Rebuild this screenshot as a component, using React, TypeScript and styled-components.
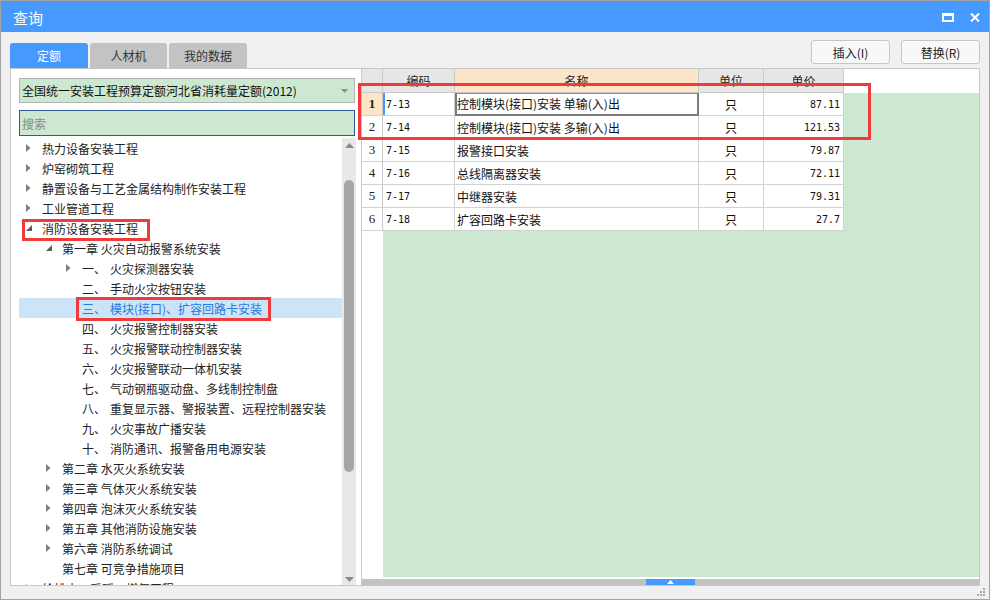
import React from "react";
import styled, { createGlobalStyle } from "styled-components";

const GlobalStyle = createGlobalStyle`
  html, body { margin: 0; padding: 0; background: #ffffff; }
  body {
    font-family: "Noto Sans CJK SC", "Liberation Sans", sans-serif;
    font-size: 12px;
    color: #222;
  }
  * { box-sizing: border-box; }
`;

interface TreeItem {
  level: number;
  toggle?: "open" | "closed";
  num?: string;
  text: string;
  selected?: boolean;
}

const treeItems: TreeItem[] = [
  { level: 0, toggle: "closed", text: "热力设备安装工程" },
  { level: 0, toggle: "closed", text: "炉窑砌筑工程" },
  { level: 0, toggle: "closed", text: "静置设备与工艺金属结构制作安装工程" },
  { level: 0, toggle: "closed", text: "工业管道工程" },
  { level: 0, toggle: "open", text: "消防设备安装工程" },
  { level: 1, toggle: "open", text: "第一章 火灾自动报警系统安装" },
  { level: 2, toggle: "closed", num: "一、", text: "火灾探测器安装" },
  { level: 2, num: "二、", text: "手动火灾按钮安装" },
  { level: 2, num: "三、", text: "模块(接口)、扩容回路卡安装", selected: true },
  { level: 2, num: "四、", text: "火灾报警控制器安装" },
  { level: 2, num: "五、", text: "火灾报警联动控制器安装" },
  { level: 2, num: "六、", text: "火灾报警联动一体机安装" },
  { level: 2, num: "七、", text: "气动钢瓶驱动盘、多线制控制盘" },
  { level: 2, num: "八、", text: "重复显示器、警报装置、远程控制器安装" },
  { level: 2, num: "九、", text: "火灾事故广播安装" },
  { level: 2, num: "十、", text: "消防通讯、报警备用电源安装" },
  { level: 1, toggle: "closed", text: "第二章 水灭火系统安装" },
  { level: 1, toggle: "closed", text: "第三章 气体灭火系统安装" },
  { level: 1, toggle: "closed", text: "第四章 泡沫灭火系统安装" },
  { level: 1, toggle: "closed", text: "第五章 其他消防设施安装" },
  { level: 1, toggle: "closed", text: "第六章 消防系统调试" },
  { level: 1, text: "第七章 可竞争措施项目" },
  { level: 0, toggle: "closed", text: "给排水、采暖、燃气工程" },
];

interface Row {
  code: string;
  name: string;
  unit: string;
  price: string;
}

const rows: Row[] = [
  { code: "7-13", name: "控制模块(接口)安装 单输(入)出", unit: "只", price: "87.11" },
  { code: "7-14", name: "控制模块(接口)安装 多输(入)出", unit: "只", price: "121.53" },
  { code: "7-15", name: "报警接口安装", unit: "只", price: "79.87" },
  { code: "7-16", name: "总线隔离器安装", unit: "只", price: "72.11" },
  { code: "7-17", name: "中继器安装", unit: "只", price: "79.31" },
  { code: "7-18", name: "扩容回路卡安装", unit: "只", price: "27.7" },
];

export default function App() {
  return (
    <>
      <GlobalStyle />
      <Window>
        <TitleBar>
          <span>查询</span>
          <WinControls>
            <svg width="12" height="9" viewBox="0 0 12 9">
              <rect x="1" y="1" width="10" height="7" fill="none" stroke="#fff" strokeWidth="2" />
              <rect x="1" y="1" width="10" height="2" fill="#fff" />
            </svg>
            <svg width="10" height="9" viewBox="0 0 10 9">
              <path d="M1 0.5 L9 8.5 M9 0.5 L1 8.5" stroke="#fff" strokeWidth="2" />
            </svg>
          </WinControls>
        </TitleBar>

        <Body>
          <TopBar>
            <Tabs>
              <Tab $active $w={78}>定额</Tab>
              <Tab $w={77}>人材机</Tab>
              <Tab $w={78}>我的数据</Tab>
            </Tabs>
            <Buttons>
              <Button>插入(I)</Button>
              <Button>替换(R)</Button>
            </Buttons>
          </TopBar>

          <Main>
            <LeftPanel>
              <Dropdown>
                <span>全国统一安装工程预算定额河北省消耗量定额(2012)</span>
                <svg width="7" height="4" viewBox="0 0 7 4">
                  <polygon points="0,0 7,0 3.5,4" fill="#8c8c8c" />
                </svg>
              </Dropdown>
              <Search placeholder="搜索" />
              <TreeArea>
                <TreeList>
                  {treeItems.map((it, i) => (
                    <TreeRow key={i} $level={it.level} $selected={!!it.selected}>
                      <Toggle>
                        {it.toggle === "closed" && (
                          <svg width="5" height="8" viewBox="0 0 5 8">
                            <polygon points="0,0 4.5,4 0,8" fill="#7f7f7f" />
                          </svg>
                        )}
                        {it.toggle === "open" && (
                          <svg width="6" height="6" viewBox="0 0 6 6">
                            <polygon points="6,0 6,6 0,6" fill="#5a5a5a" />
                          </svg>
                        )}
                      </Toggle>
                      {it.num && <Num>{it.num}</Num>}
                      <span>{it.text}</span>
                    </TreeRow>
                  ))}
                </TreeList>
                <VScroll>
                  <svg width="9" height="5" viewBox="0 0 9 5">
                    <polygon points="0,5 9,5 4.5,0" fill="#8a8a8a" />
                  </svg>
                  <VThumb />
                  <svg width="9" height="5" viewBox="0 0 9 5">
                    <polygon points="0,0 9,0 4.5,5" fill="#8a8a8a" />
                  </svg>
                </VScroll>
              </TreeArea>
            </LeftPanel>

            <RightPanel>
              <Grid>
                <HeaderRow>
                  <HeadCell $w={21} />
                  <HeadCell $w={72}>编码</HeadCell>
                  <HeadCell $w={244} $active>名称</HeadCell>
                  <HeadCell $w={65}>单位</HeadCell>
                  <HeadCell $w={80}>单价</HeadCell>
                  <HeadFill />
                </HeaderRow>
                <GridBody>
                  <RowHeadCol>
                    {rows.map((r, i) => (
                      <RowHead key={r.code} $active={i === 0}>{i + 1}</RowHead>
                    ))}
                  </RowHeadCol>
                  <DataCol>
                    {rows.map((r, i) => (
                      <DataRow key={r.code}>
                        <CodeCell $active={i === 0}>{r.code}</CodeCell>
                        <NameCell $focused={i === 0}>{r.name}</NameCell>
                        <UnitCell>{r.unit}</UnitCell>
                        <PriceCell>{r.price}</PriceCell>
                      </DataRow>
                    ))}
                  </DataCol>
                </GridBody>
              </Grid>
              <HScroll>
                <HThumb>
                  <svg width="7" height="4" viewBox="0 0 7 4">
                    <polygon points="0,4 7,4 3.5,0" fill="#fff" />
                  </svg>
                </HThumb>
              </HScroll>
            </RightPanel>
          </Main>

          <Footer>
            <svg width="10" height="10" viewBox="0 0 10 10">
              <rect x="7" y="1" width="2" height="2" fill="#a8a8a8" />
              <rect x="4" y="4" width="2" height="2" fill="#a8a8a8" />
              <rect x="7" y="4" width="2" height="2" fill="#a8a8a8" />
              <rect x="1" y="7" width="2" height="2" fill="#a8a8a8" />
              <rect x="4" y="7" width="2" height="2" fill="#a8a8a8" />
              <rect x="7" y="7" width="2" height="2" fill="#a8a8a8" />
            </svg>
          </Footer>
        </Body>

        <Mark $x={357} $y={82} $w={513} $h={57} />
        <Mark $x={21} $y={218} $w={128} $h={22} />
        <Mark $x={75} $y={296} $w={195} $h={24} />
      </Window>
    </>
  );
}

const Window = styled.div`
  position: relative;
  width: 990px;
  height: 600px;
  border: 1px solid #a3a3a3;
  background: #f0f0f0;
  display: flex;
  flex-direction: column;
  overflow: hidden;
`;

const TitleBar = styled.div`
  height: 31px;
  background: #4599ff;
  color: #fff;
  display: flex;
  align-items: center;
  padding: 1px 9px 0 12px;
  font-size: 15px;
`;

const WinControls = styled.div`
  margin-left: auto;
  display: flex;
  align-items: center;
  gap: 16px;
`;

const Body = styled.div`
  flex: 1;
  display: flex;
  flex-direction: column;
  padding: 8px 9px 0 9px;
  min-height: 0;
`;

const TopBar = styled.div`
  height: 28px;
  display: flex;
  justify-content: space-between;
`;

const Tabs = styled.div`
  display: flex;
  align-self: flex-end;
  gap: 2px;
`;

const Tab = styled.div<{ $active?: boolean; $w: number }>`
  width: ${(p) => p.$w}px;
  height: 25px;
  border-radius: 3px 3px 0 0;
  display: flex;
  align-items: center;
  justify-content: center;
  font-size: 12px;
  background: ${(p) => (p.$active ? "#4599ff" : "#c3c3c3")};
  color: ${(p) => (p.$active ? "#fff" : "#333")};
`;

const Buttons = styled.div`
  display: flex;
  gap: 11px;
  align-self: flex-start;
`;

const Button = styled.button`
  width: 79px;
  height: 24px;
  border: 1px solid #c6c6c6;
  border-radius: 3px;
  background: #f8f8f8;
  font-family: "Noto Sans CJK SC", "Liberation Sans", sans-serif;
  font-size: 12px;
  color: #222;
  padding: 0;
`;

const Main = styled.div`
  height: 518px;
  display: flex;
`;

const LeftPanel = styled.div`
  width: 352px;
  border: 1px solid #c8c8c8;
  background: #fff;
  display: flex;
  flex-direction: column;
  padding: 9px 5px 0 8px;
  min-height: 0;
`;

const Dropdown = styled.div`
  height: 25px;
  margin-right: 1px;
  background: #cde8d0;
  border: 1px solid #b3b3b3;
  display: flex;
  align-items: center;
  justify-content: space-between;
  padding: 0 6px 0 2px;
  font-size: 12px;
  color: #111;
`;

const Search = styled.input`
  margin-top: 7px;
  margin-right: 1px;
  height: 26px;
  background: #cde8d0;
  border: 1px solid #2e5c97;
  outline: none;
  padding: 0 2px;
  font-family: "Noto Sans CJK SC", "Liberation Sans", sans-serif;
  font-size: 12px;
  &::placeholder { color: #8a8a8a; }
`;

const TreeArea = styled.div`
  margin-top: 2px;
  flex: 1;
  min-height: 0;
  display: flex;
  overflow: hidden;
`;

const TreeList = styled.div`
  flex: 1;
  overflow: hidden;
`;

const TreeRow = styled.div<{ $level: number; $selected: boolean }>`
  height: 20px;
  display: flex;
  align-items: center;
  padding-left: ${(p) => p.$level * 20}px;
  white-space: nowrap;
  font-size: 12px;
  background: ${(p) => (p.$selected ? "#cce4f7" : "transparent")};
  color: ${(p) => (p.$selected ? "#2a78e0" : "#222")};
`;

const Toggle = styled.span`
  width: 23px;
  height: 20px;
  flex: none;
  display: flex;
  align-items: center;
  padding-left: 7px;
`;

const Num = styled.span`
  display: inline-block;
  width: 28px;
`;

const VScroll = styled.div`
  width: 14px;
  flex: none;
  background: #e8e8e8;
  display: flex;
  flex-direction: column;
  align-items: center;
  padding: 5px 0 3px;
  & > svg:last-child { margin-top: auto; }
`;

const VThumb = styled.div`
  width: 10px;
  height: 292px;
  margin-top: 32px;
  border-radius: 5px;
  background: #a6a6a6;
`;

const RightPanel = styled.div`
  flex: 1;
  border: 1px solid #c8c8c8;
  border-left: none;
  background: #fff;
  display: flex;
  flex-direction: column;
  min-height: 0;
`;

const Grid = styled.div`
  flex: 1;
  display: flex;
  flex-direction: column;
  min-height: 0;
`;

const HeaderRow = styled.div`
  height: 24px;
  display: flex;
  flex: none;
`;

const HeadCell = styled.div<{ $w: number; $active?: boolean }>`
  width: ${(p) => p.$w}px;
  flex: none;
  background: ${(p) => (p.$active ? "#fde5c8" : "#e6e6e6")};
  border-right: 1px solid #c9c9c9;
  border-bottom: 1px solid #c9c9c9;
  display: flex;
  align-items: center;
  justify-content: center;
  font-size: 12px;
  color: #222;
`;

const HeadFill = styled.div`
  flex: 1;
  background: #fff;
`;

const GridBody = styled.div`
  flex: 1;
  display: flex;
  min-height: 0;
`;

const RowHeadCol = styled.div`
  width: 21px;
  flex: none;
  background: #fff;
`;

const RowHead = styled.div<{ $active: boolean }>`
  height: 23px;
  border-right: 1px solid #c9c9c9;
  border-bottom: 1px solid #d2d2d2;
  background: ${(p) => (p.$active ? "#fde5c8" : "#fff")};
  display: flex;
  align-items: center;
  justify-content: center;
  font-family: "Liberation Serif", serif;
  font-size: 13px;
  font-weight: ${(p) => (p.$active ? 700 : 400)};
  color: #222;
`;

const DataCol = styled.div`
  flex: 1;
  background: #cde8d0;
`;

const DataRow = styled.div`
  display: flex;
  height: 23px;
`;

const Cell = styled.div`
  height: 23px;
  flex: none;
  background: #fff;
  border-right: 1px solid #d2d2d2;
  border-bottom: 1px solid #d2d2d2;
  display: flex;
  align-items: center;
  padding: 0 3px;
  white-space: nowrap;
  color: #111;
`;

const CodeCell = styled(Cell)<{ $active: boolean }>`
  width: 72px;
  font-family: "DejaVu Sans Mono", "Liberation Mono", monospace;
  font-size: 10px;
  box-shadow: ${(p) => (p.$active ? "inset 2px 0 0 #4599ff" : "none")};
`;

const NameCell = styled(Cell)<{ $focused: boolean }>`
  width: 244px;
  font-size: 12px;
  padding-left: 2px;
  ${(p) =>
    p.$focused &&
    `
    border-right: 2px solid #7c7c7c;
    border-bottom: 2px solid #7c7c7c;
    box-shadow: inset 2px 0 0 #7c7c7c, inset 0 1px 0 #4599ff;
  `}
`;

const UnitCell = styled(Cell)`
  width: 65px;
  justify-content: center;
  font-size: 12px;
`;

const PriceCell = styled(Cell)`
  width: 80px;
  justify-content: flex-end;
  font-family: "DejaVu Sans Mono", "Liberation Mono", monospace;
  font-size: 10px;
`;

const HScroll = styled.div`
  flex: none;
  height: 6px;
  margin-top: 2px;
  background: #c2c2c2;
  display: flex;
`;

const HThumb = styled.div`
  width: 49px;
  margin-left: 284px;
  background: #4599ff;
  display: flex;
  align-items: center;
  justify-content: center;
`;

const Footer = styled.div`
  flex: 1;
  display: flex;
  align-items: flex-end;
  justify-content: flex-end;
  margin-right: -6px;
  padding-bottom: 2px;
`;

const Mark = styled.div<{ $x: number; $y: number; $w: number; $h: number }>`
  position: absolute;
  left: ${(p) => p.$x}px;
  top: ${(p) => p.$y}px;
  width: ${(p) => p.$w}px;
  height: ${(p) => p.$h}px;
  border: 3px solid #ef3b3b;
  pointer-events: none;
`;
